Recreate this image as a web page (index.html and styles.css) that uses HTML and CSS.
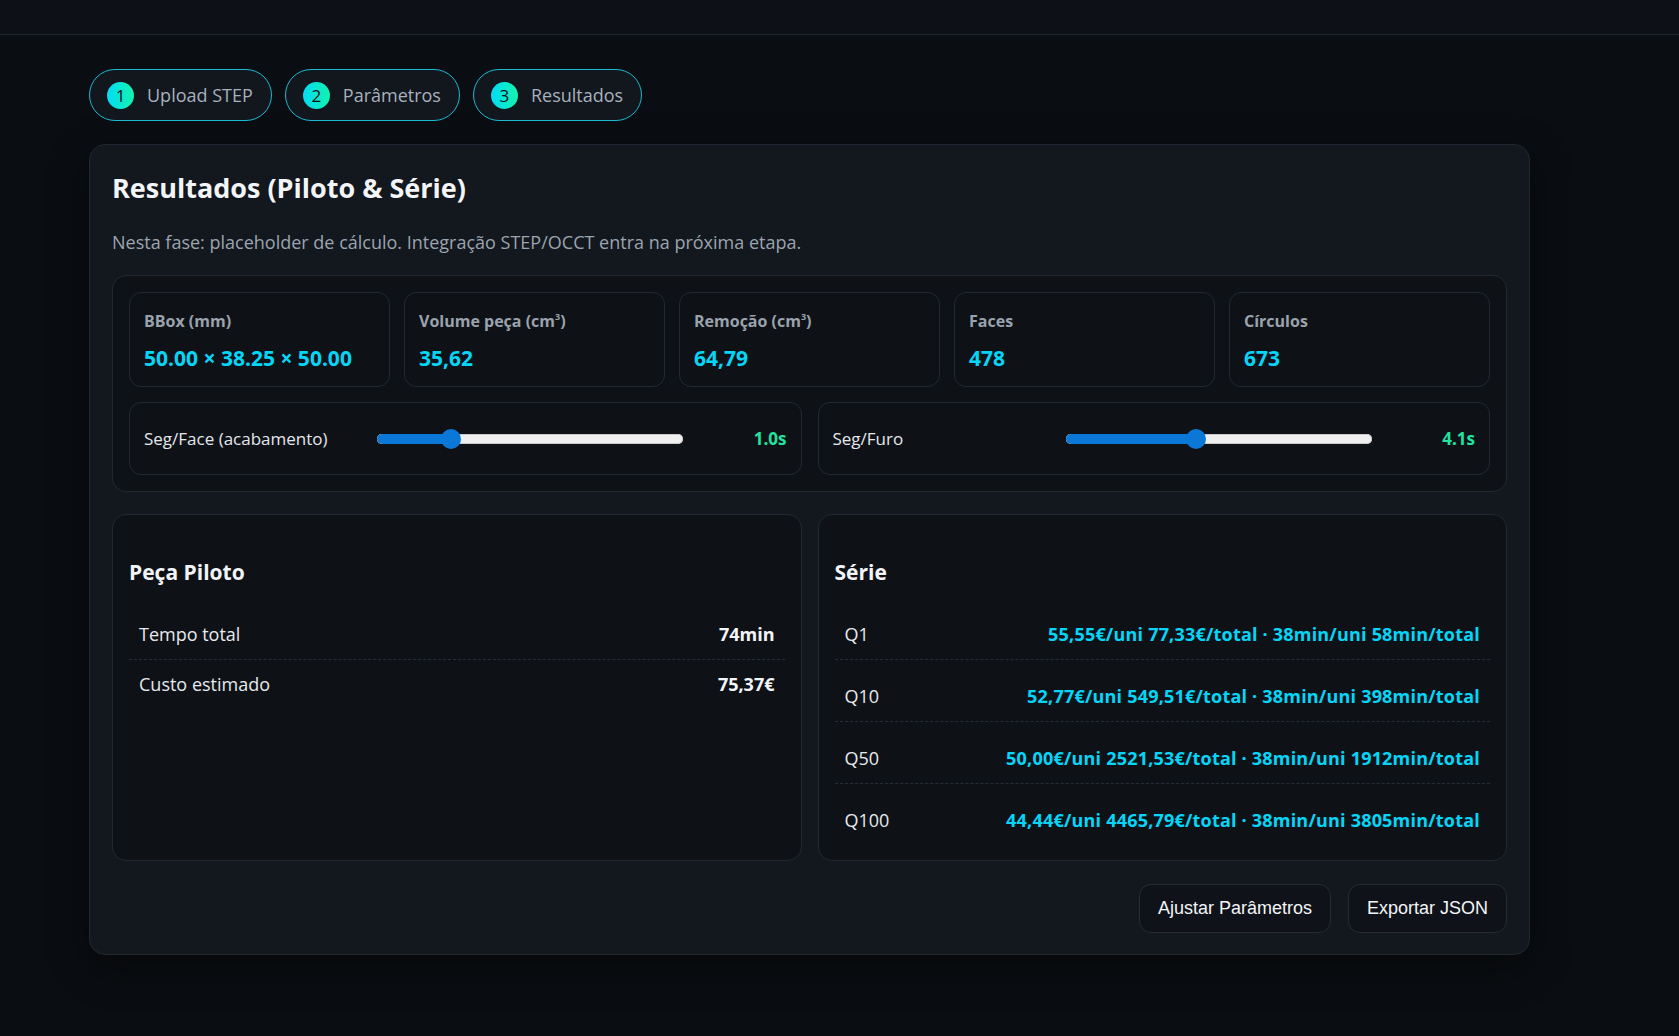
FILE: index.html
```html
<!DOCTYPE html>
<html lang="pt">
<head>
<meta charset="utf-8">
<title>Resultados</title>
<link rel="stylesheet" href="styles.css">
</head>
<body>
<header class="topbar"></header>
<main class="page">
  <nav class="steps">
    <div class="step"><span class="step-num">1</span><span class="step-label">Upload STEP</span></div>
    <div class="step"><span class="step-num">2</span><span class="step-label">Parâmetros</span></div>
    <div class="step"><span class="step-num">3</span><span class="step-label">Resultados</span></div>
  </nav>

  <section class="card">
    <h2 class="card-title">Resultados (Piloto &amp; Série)</h2>
    <p class="card-sub">Nesta fase: placeholder de cálculo. Integração STEP/OCCT entra na próxima etapa.</p>

    <div class="panel summary">
      <div class="metrics">
        <div class="metric"><div class="metric-label">BBox (mm)</div><div class="metric-value">50.00 × 38.25 × 50.00</div></div>
        <div class="metric"><div class="metric-label">Volume peça (cm<sup>3</sup>)</div><div class="metric-value">35,62</div></div>
        <div class="metric"><div class="metric-label">Remoção (cm<sup>3</sup>)</div><div class="metric-value">64,79</div></div>
        <div class="metric"><div class="metric-label">Faces</div><div class="metric-value">478</div></div>
        <div class="metric"><div class="metric-label">Círculos</div><div class="metric-value">673</div></div>
      </div>
      <div class="sliders">
        <div class="slider-box">
          <span class="slider-label">Seg/Face (acabamento)</span>
          <div class="range"><div class="range-fill" style="width:24.3%"></div><div class="range-thumb" style="left:24.3%"></div></div>
          <span class="slider-value">1.0s</span>
        </div>
        <div class="slider-box">
          <span class="slider-label">Seg/Furo</span>
          <div class="range"><div class="range-fill" style="width:42.5%"></div><div class="range-thumb" style="left:42.5%"></div></div>
          <span class="slider-value">4.1s</span>
        </div>
      </div>
    </div>

    <div class="results">
      <div class="panel result">
        <h3 class="result-title">Peça Piloto</h3>
        <div class="rows">
          <div class="row"><span class="row-label">Tempo total</span><span class="row-value">74min</span></div>
          <div class="row"><span class="row-label">Custo estimado</span><span class="row-value">75,37€</span></div>
        </div>
      </div>
      <div class="panel result">
        <h3 class="result-title">Série</h3>
        <div class="rows rows-series">
          <div class="row"><span class="row-label">Q1</span><span class="row-value accent">55,55€/uni 77,33€/total · 38min/uni 58min/total</span></div>
          <div class="row"><span class="row-label">Q10</span><span class="row-value accent">52,77€/uni 549,51€/total · 38min/uni 398min/total</span></div>
          <div class="row"><span class="row-label">Q50</span><span class="row-value accent">50,00€/uni 2521,53€/total · 38min/uni 1912min/total</span></div>
          <div class="row"><span class="row-label">Q100</span><span class="row-value accent">44,44€/uni 4465,79€/total · 38min/uni 3805min/total</span></div>
        </div>
      </div>
    </div>

    <div class="actions">
      <button class="btn" type="button">Ajustar Parâmetros</button>
      <button class="btn" type="button">Exportar JSON</button>
    </div>
  </section>
</main>
</body>
</html>
```
FILE: styles.css
```css
* { box-sizing: border-box; }

html, body {
  margin: 0;
  padding: 0;
}

body {
  background: #0a0d11;
  color: #e6e9ee;
  font-family: "Open Sans", "Noto Sans", "DejaVu Sans", sans-serif;
  font-size: 18px;
  min-height: 1036px;
}

.topbar {
  height: 35px;
  background: #0d1117;
  border-bottom: 1px solid #20262e;
}

.page {
  padding: 34px 0 0 89px;
}

.steps {
  display: flex;
  gap: 13px;
}

.step {
  display: flex;
  align-items: center;
  gap: 13px;
  height: 52px;
  padding: 0 18px 0 17px;
  border: 1px solid #1cb9d3;
  border-radius: 26px;
  background: #12161d;
}

.step-num {
  width: 27px;
  height: 27px;
  border-radius: 50%;
  background: linear-gradient(90deg, #00dcf5 0%, #14f2ae 100%);
  color: #0a1014;
  font-size: 17px;
  line-height: 27px;
  text-align: center;
}

.step-label {
  color: #a7b1bd;
  font-size: 18px;
  line-height: 24px;
}

.card {
  width: 1441px;
  margin-top: 23px;
  padding: 22px 22px 21px;
  background: #13171e;
  border: 1px solid #212831;
  border-radius: 16px;
  box-shadow: 0 12px 40px rgba(0, 0, 0, 0.35);
}

.card-title {
  margin: 4px 0 0;
  font-size: 27px;
  line-height: 34px;
  font-weight: 700;
  color: #f3f5f8;
}

.card-sub {
  margin: 24px 0 0;
  font-size: 18px;
  line-height: 26px;
  color: #9ba4af;
}

.panel {
  background: #0e1217;
  border: 1px solid #212831;
  border-radius: 14px;
}

.summary {
  margin-top: 20px;
  padding: 16px;
}

.metrics {
  display: grid;
  grid-template-columns: repeat(5, 1fr);
  gap: 14px;
}

.metric {
  padding: 16px 14px 13px;
  border: 1px solid #222932;
  border-radius: 12px;
  background: #0e1217;
}

.metric-label {
  font-size: 16px;
  line-height: 24px;
  font-weight: 700;
  color: #9aa2ad;
}

.metric-label sup {
  font-size: 9px;
  line-height: 0;
  vertical-align: 7px;
}

.metric-value {
  margin-top: 10px;
  font-size: 21px;
  line-height: 30px;
  font-weight: 700;
  color: #05d6f8;
}

.sliders {
  margin-top: 15px;
  display: grid;
  grid-template-columns: 1fr 1fr;
  gap: 16px;
}

.slider-box {
  display: flex;
  align-items: center;
  height: 73px;
  padding: 0 14px;
  border: 1px solid #222932;
  border-radius: 12px;
}

.slider-label {
  width: 233px;
  flex: none;
  font-size: 17px;
  color: #e4e7eb;
}

.range {
  position: relative;
  width: 306px;
  height: 10px;
  flex: none;
  border-radius: 5px;
  background: #efefef;
  box-shadow: inset 0 0 0 1px #c9c9c9;
}

.range-fill {
  height: 100%;
  border-radius: 5px 0 0 5px;
  background: #0b78d8;
}

.range-thumb {
  position: absolute;
  top: 50%;
  width: 20px;
  height: 20px;
  margin: -10px 0 0 -10px;
  border-radius: 50%;
  background: #0b78d8;
}

.slider-value {
  flex: 1;
  text-align: right;
  font-size: 17px;
  font-weight: 700;
  color: #22e3a0;
}

.results {
  margin-top: 22px;
  display: grid;
  grid-template-columns: 1fr 1fr;
  gap: 16px;
}

.result {
  padding: 16px 16px 15px;
}

.result-title {
  margin: 27px 0 24px;
  font-size: 21px;
  line-height: 28px;
  font-weight: 700;
  color: #f2f4f7;
}

.rows {
  display: flex;
  flex-direction: column;
}

.rows-series {
  gap: 12px;
}

.row {
  display: flex;
  justify-content: space-between;
  align-items: center;
  padding: 12px 10px 12px 10px;
  line-height: 25px;
  border-bottom: 1px dashed #262d36;
}

.row:last-child {
  border-bottom: none;
}

.row-label {
  font-size: 18px;
  color: #e6e9ee;
}

.row-value {
  font-size: 18px;
  font-weight: 700;
  color: #f3f5f8;
}

.row-value.accent {
  color: #05d6f8;
  letter-spacing: 0.2px;
}

.actions {
  margin-top: 23px;
  display: flex;
  justify-content: flex-end;
  gap: 17px;
}

.btn {
  height: 49px;
  padding: 0 18px;
  border: 1px solid #252c36;
  border-radius: 12px;
  background: #0f1319;
  color: #f3f5f8;
  font-family: "Liberation Sans", Arial, sans-serif;
  font-size: 18px;
  cursor: pointer;
}
```
